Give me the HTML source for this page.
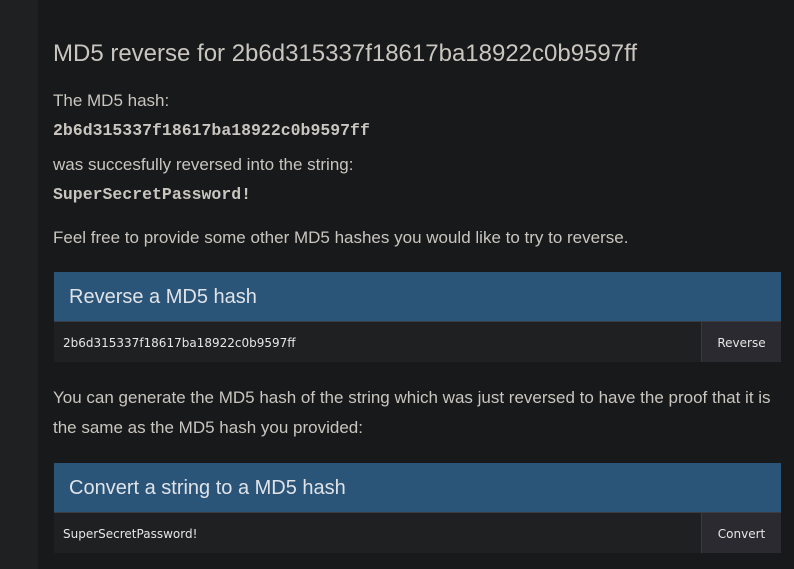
<!DOCTYPE html>
<html><head><style>
body{margin:0;width:794px;height:569px;background:#18191b;font-family:"Liberation Sans",sans-serif;color:#c9c5bf;overflow:hidden;position:relative}
.side{position:absolute;left:0;top:0;width:38px;height:569px;background:#1f2022}
.t{position:absolute;left:53px;white-space:nowrap}
h1{position:absolute;left:53px;top:40px;margin:0;font-weight:normal;font-size:24px;color:#c9c5bf}
.p{font-size:17px}
.m{font-family:"Liberation Mono",monospace;font-weight:bold;font-size:16.5px}
.hd{position:absolute;left:54px;width:727px;height:50px;background:#2a5478;color:#dfe3e8;font-size:20px;box-sizing:border-box;padding-left:15px;line-height:51px;border-bottom:1px solid #3a3d42}
.in{position:absolute;left:54px;width:647px;height:40px;background:#1f2022;font-family:"DejaVu Sans",sans-serif;font-size:12px;color:#e6e6e6;line-height:43px;padding-left:9px;box-sizing:border-box}
.bt{position:absolute;left:701px;width:80px;height:40px;background:#2b2a31;border-left:1px solid #3a3a40;font-family:"DejaVu Sans",sans-serif;font-size:12px;color:#e6e6e6;line-height:43px;text-align:center;box-sizing:border-box}
</style></head><body>
<div class="side"></div>
<h1>MD5 reverse for 2b6d315337f18617ba18922c0b9597ff</h1>
<div class="t p" style="top:91px">The MD5 hash:</div>
<div class="t m" style="top:121px">2b6d315337f18617ba18922c0b9597ff</div>
<div class="t p" style="top:155px">was succesfully reversed into the string:</div>
<div class="t m" style="top:185px">SuperSecretPassword!</div>
<div class="t p" style="top:228px">Feel free to provide some other MD5 hashes you would like to try to reverse.</div>
<div class="hd" style="top:272px">Reverse a MD5 hash</div>
<div class="in" style="top:322px">2b6d315337f18617ba18922c0b9597ff</div>
<div class="bt" style="top:322px">Reverse</div>
<div class="t p" style="top:383px;line-height:30px;white-space:normal;width:730px">You can generate the MD5 hash of the string which was just reversed to have the proof that it is the same as the MD5 hash you provided:</div>
<div class="hd" style="top:463px">Convert a string to a MD5 hash</div>
<div class="in" style="top:513px">SuperSecretPassword!</div>
<div class="bt" style="top:513px">Convert</div>
</body></html>
